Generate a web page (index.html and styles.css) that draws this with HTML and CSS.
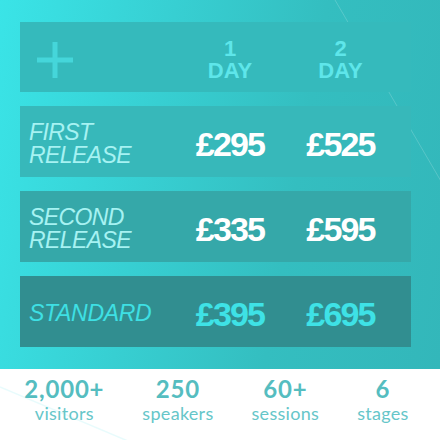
FILE: index.html
```html
<!DOCTYPE html>
<html>
<head>
<meta charset="utf-8">
<link rel="stylesheet" href="styles.css">
</head>
<body>
<div class="page">
  <section class="pricing">
    <svg class="deco" width="440" height="369" viewBox="0 0 440 369" aria-hidden="true">
      <line x1="335" y1="0" x2="452" y2="200" stroke="#ffffff" stroke-opacity="0.18" stroke-width="1"/>
    </svg>
    <div class="row head">
      <div class="cell label">
        <svg class="plus" width="36" height="36" viewBox="0 0 36 36"><rect x="15.5" y="0" width="5" height="36" fill="#45d6da"/><rect x="0" y="15.5" width="36" height="5" fill="#45d6da"/></svg>
      </div>
      <div class="cell day">1<br>DAY</div>
      <div class="cell day">2<br>DAY</div>
    </div>
    <div class="row first">
      <div class="cell label"><span class="name">FIRST<br>RELEASE</span></div>
      <div class="cell price">£295</div>
      <div class="cell price">£525</div>
    </div>
    <div class="row second">
      <div class="cell label"><span class="name">SECOND<br>RELEASE</span></div>
      <div class="cell price">£335</div>
      <div class="cell price">£595</div>
    </div>
    <div class="row standard">
      <div class="cell label"><span class="name">STANDARD</span></div>
      <div class="cell price">£395</div>
      <div class="cell price">£695</div>
    </div>
  </section>
  <section class="stats">
    <svg class="deco2" width="440" height="71" viewBox="0 0 440 71" aria-hidden="true">
      <line x1="0" y1="18" x2="135" y2="75" stroke="#3ee0e4" stroke-opacity="0.12" stroke-width="1.5"/>
    </svg>
    <div class="stat"><div class="num">2,000+</div><div class="lbl">visitors</div></div>
    <div class="stat"><div class="num">250</div><div class="lbl">speakers</div></div>
    <div class="stat"><div class="num">60+</div><div class="lbl">sessions</div></div>
    <div class="stat"><div class="num">6</div><div class="lbl">stages</div></div>
  </section>
</div>
</body>
</html>
```

FILE: styles.css
```css
* { box-sizing: border-box; }
html, body { margin: 0; padding: 0; }
body {
  width: 440px;
  height: 440px;
  overflow: hidden;
  background: #ffffff;
  font-family: "Liberation Sans", Arial, sans-serif;
}
.page { width: 440px; }
.pricing {
  position: relative;
  height: 369px;
  padding: 22px 29px 0 20px;
  display: flex;
  flex-direction: column;
  gap: 14px;
  background: linear-gradient(100deg, #3ae4e7 0%, #37cfd2 35%, #34bec0 65%, #33b7ba 100%);
  overflow: hidden;
}
.deco { position: absolute; left: 0; top: 0; }
.row {
  position: relative;
  display: grid;
  grid-template-columns: 155px 110px 111px 1fr;
  align-items: center;
  height: 71px;
}
.row.head { height: 70px; background: #35babc; }
.row.first { background: #37b8ba; }
.row.second { background: #35a8a9; }
.row.standard { background: #318e90; }
.cell.label { padding-left: 9px; }
.plus { display: block; margin-left: 8px; margin-top: 5px; }
.day {
  text-align: center;
  color: #5ee6ea;
  font-weight: bold;
  font-size: 22px;
  line-height: 22px;
  padding-top: 6px;
}
.name {
  display: block;
  font-style: italic;
  font-size: 23px;
  line-height: 23px;
  letter-spacing: -0.6px;
  color: #a6f2f2;
  padding-top: 5px;
}
.standard .name { color: #3ee0e4; letter-spacing: -0.3px; padding-top: 4px; }
.price {
  text-align: center;
  color: #ffffff;
  font-weight: bold;
  font-size: 34px;
  letter-spacing: -1.8px;
  padding-top: 5px;
}
.standard .price { color: #3ee2e6; }
.stats {
  position: relative;
  height: 71px;
  display: flex;
  justify-content: center;
  gap: 38px;
  padding-top: 7px;
  padding-right: 7px;
  font-family: Lato, "Open Sans", sans-serif;
  overflow: hidden;
}
.deco2 { position: absolute; left: 0; top: 0; }
.stat { position: relative; text-align: center; }
.num {
  font-weight: bold;
  font-size: 24px;
  line-height: 26px;
  letter-spacing: 0.8px;
  color: #55bdc0;
}
.lbl {
  font-size: 18px;
  line-height: 22px;
  letter-spacing: 0.3px;
  color: #66c6c9;
}
```
